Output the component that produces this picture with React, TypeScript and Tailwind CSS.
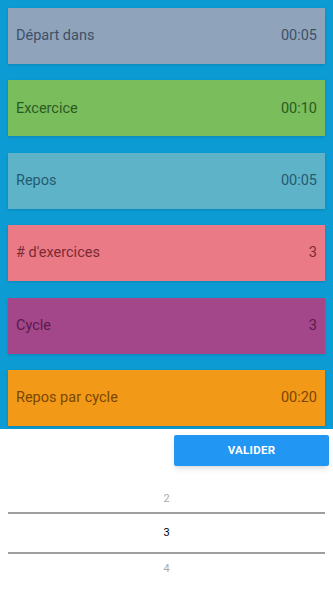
import React from "react";

const rows = [
  { label: "Départ dans", value: "00:05", bg: "bg-[#8fa4bb]", fg: "text-[#3e5068]" },
  { label: "Excercice", value: "00:10", bg: "bg-[#79bd5d]", fg: "text-[#2c5a1f]" },
  { label: "Repos", value: "00:05", bg: "bg-[#5fb3c9]", fg: "text-[#235b70]" },
  { label: "# d'exercices", value: "3", bg: "bg-[#ea7a85]", fg: "text-[#7a2a34]" },
  { label: "Cycle", value: "3", bg: "bg-[#a3468a]", fg: "text-[#5a1b4b]" },
  { label: "Repos par cycle", value: "00:20", bg: "bg-[#f29a17]", fg: "text-[#7a4605]" },
];

export default function App() {
  return (
    <div className="w-[333px] h-[592px] bg-white overflow-hidden font-['Roboto',sans-serif]">
      {/* liste des réglages */}
      <div className="bg-[#0c9bd2] h-[429px] px-2 pt-2 flex flex-col gap-[16.4px]">
        {rows.map((r) => (
          <div
            key={r.label}
            className={`${r.bg} ${r.fg} h-[56px] shrink-0 flex items-center justify-between px-2 text-[14.5px] shadow-sm`}
          >
            <span>{r.label}</span>
            <span>{r.value}</span>
          </div>
        ))}
      </div>

      {/* bouton */}
      <div className="flex justify-end pr-1 pt-[6px]">
        <button className="w-[155px] h-[31px] bg-[#2196f3] text-white text-[11.5px] font-bold rounded-[2px] shadow-md tracking-wide">
          VALIDER
        </button>
      </div>

      {/* sélecteur */}
      <div className="mx-2 mt-[23px] flex flex-col items-center text-[11px]">
        <div className="h-[20px] flex items-center text-[#aaaaaa]">2</div>
        <div className="w-full h-[2px] bg-[#9e9e9e] mt-[3px]" />
        <div className="h-[38px] flex items-center text-black">3</div>
        <div className="w-full h-[2px] bg-[#9e9e9e]" />
        <div className="h-[30px] flex items-center text-[#aaaaaa]">4</div>
      </div>
    </div>
  );
}
